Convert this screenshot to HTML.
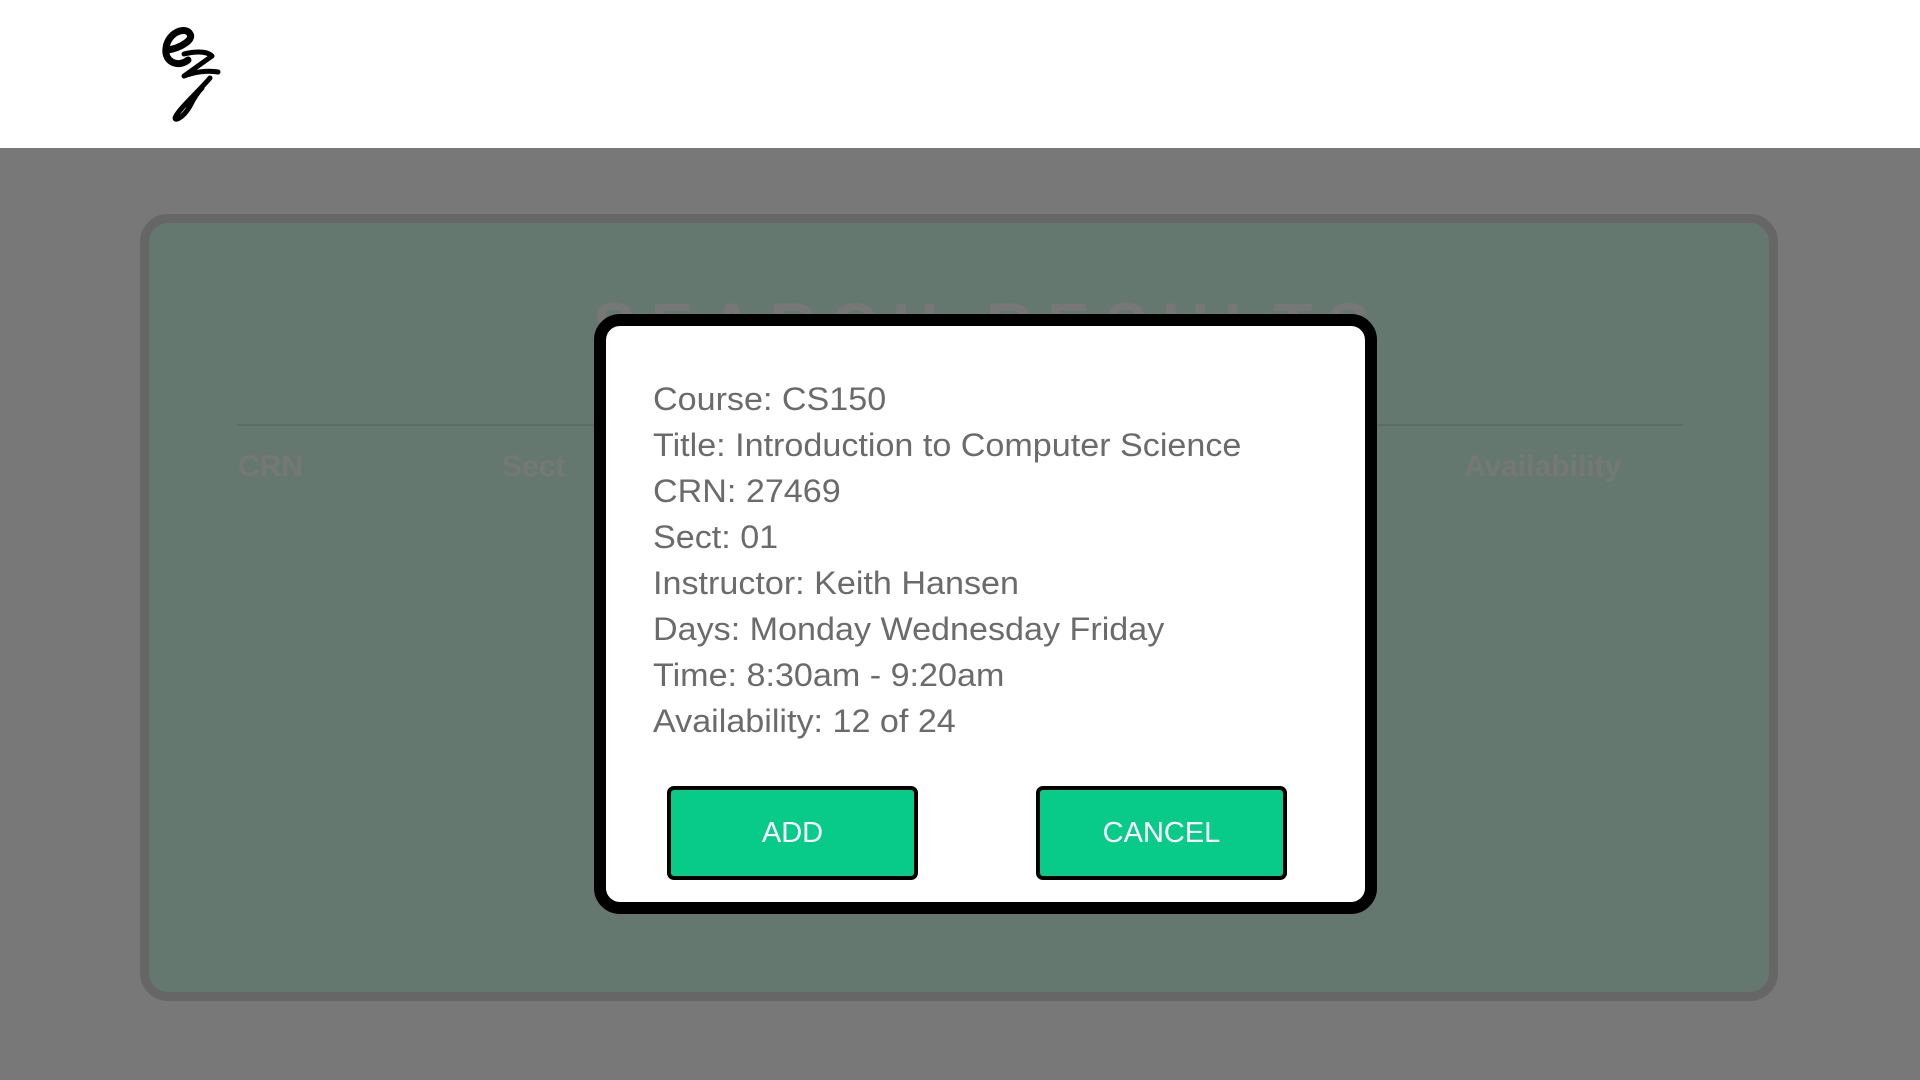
<!DOCTYPE html>
<html><head><style>
*{margin:0;padding:0;box-sizing:border-box}
body{width:1920px;height:1080px;background:#787878;position:relative;overflow:hidden;font-family:"Liberation Sans",sans-serif}
.header{position:absolute;left:0;top:0;width:1920px;height:148px;background:#fff}
.panel{position:absolute;left:140px;top:214px;width:1638px;height:787px;background:#657870;border:9px solid #666;border-radius:28px}
.title{position:absolute;left:29px;width:1920px;top:289px;line-height:74px;text-align:center;font-weight:bold;font-size:64px;letter-spacing:15px;color:#777}
.line{position:absolute;left:237px;top:424px;width:1446px;height:2px;background:#5f6a65}
.col{position:absolute;top:450px;font-weight:bold;font-size:30px;color:#757876}
.modal{position:absolute;left:594px;top:314px;width:783px;height:600px;background:#fff;border:12px solid #000;border-radius:26px}
.info{position:absolute;left:47px;top:50px;font-size:32px;line-height:46px;color:#6b6b6b;transform:scaleX(1.066);transform-origin:left}
.btn{position:absolute;top:460px;width:251px;height:94px;background:#08cb8a;border:4px solid #000;border-radius:7px;color:#fff;font-size:29px;text-align:center;line-height:86px}
</style></head><body>
<div class="header">
<svg style="position:absolute;left:160px;top:20px" width="70" height="105" viewBox="0 0 70 105">
<path d="M8 30 C 20 28, 34 20, 30 14 C 26 6, 8 12, 6 28 C 4 42, 18 48, 28 40" fill="none" stroke="#000" stroke-width="7" stroke-linecap="round"/>
<path d="M24 34 C 32 32, 46 30, 52 36 L 24 56 C 34 52, 48 50, 58 52" fill="none" stroke="#000" stroke-width="5" stroke-linecap="round" stroke-linejoin="round"/>
<path d="M50 58 C 38 72, 20 88, 16 96 C 12 102, 22 100, 30 86 C 34 78, 38 72, 42 68" fill="none" stroke="#000" stroke-width="5" stroke-linecap="round"/>
</svg>
</div>
<div class="panel"></div>
<div class="title">SEARCH RESULTS</div>
<div class="line"></div>
<div class="col" style="left:238px">CRN</div>
<div class="col" style="left:502px">Sect</div>
<div class="col" style="left:1464px">Availability</div>
<div class="modal">
<div class="info">Course: CS150<br>Title: Introduction to Computer Science<br>CRN: 27469<br>Sect: 01<br>Instructor: Keith Hansen<br>Days: Monday Wednesday Friday<br>Time: 8:30am - 9:20am<br>Availability: 12 of 24</div>
<div class="btn" style="left:61px">ADD</div>
<div class="btn" style="left:430px">CANCEL</div>
</div>
</body></html>
